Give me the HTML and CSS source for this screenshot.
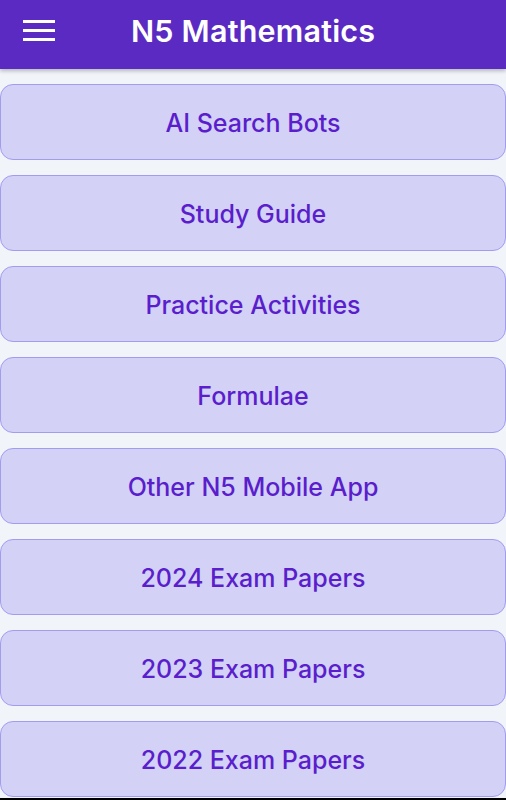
FILE: index.html
```html
<!DOCTYPE html>
<html>
<head>
<meta charset="utf-8">
<link rel="stylesheet" href="styles.css">
</head>
<body>
<header class="topbar">
  <button class="menu" aria-label="Menu">
    <svg width="32" height="22" viewBox="0 0 32 22"><rect x="0" y="1" width="32" height="3" fill="#fff"/><rect x="0" y="10" width="32" height="3" fill="#fff"/><rect x="0" y="19" width="32" height="3" fill="#fff"/></svg>
  </button>
  <h1 class="title">N5 Mathematics</h1>
</header>
<main class="list">
  <a class="item">AI Search Bots</a>
  <a class="item">Study Guide</a>
  <a class="item">Practice Activities</a>
  <a class="item">Formulae</a>
  <a class="item">Other N5 Mobile App</a>
  <a class="item">2024 Exam Papers</a>
  <a class="item">2023 Exam Papers</a>
  <a class="item">2022 Exam Papers</a>
</main>
<div class="edge"></div>
</body>
</html>
```
FILE: styles.css
```css
html, body {
  margin: 0;
  padding: 0;
}
body {
  background: #f1f4f9;
  font-family: Inter, "Noto Sans", sans-serif;
  height: 800px;
  overflow: hidden;
  display: flex;
  flex-direction: column;
}
.topbar {
  height: 69px;
  flex: none;
  background: #5b2ac3;
  display: flex;
  align-items: center;
  position: relative;
  box-shadow: 0 2px 4px rgba(0,0,0,0.25);
  z-index: 1;
}
.menu {
  background: none;
  border: 0;
  padding: 0;
  margin-left: 23px;
  margin-top: -9px;
  width: 32px;
  height: 22px;
  display: flex;
}
.title {
  margin: -8px 0 0 76px;
  color: #fff;
  font-size: 30.5px;
  font-weight: 600;
  letter-spacing: 0.2px;
}
.list {
  flex: none;
  display: flex;
  flex-direction: column;
  gap: 15px;
  padding-top: 15px;
}
.item {
  box-sizing: border-box;
  height: 76px;
  width: 506px;
  padding-top: 2px;
  border: 1px solid #a29cf1;
  border-radius: 13px;
  background: #d3d1f6;
  color: #5a1ecc;
  font-size: 25px;
  font-weight: 500;
  display: flex;
  align-items: center;
  justify-content: center;
}
.edge {
  flex: 1;
  margin-top: 1px;
  background: #000;
}
```
